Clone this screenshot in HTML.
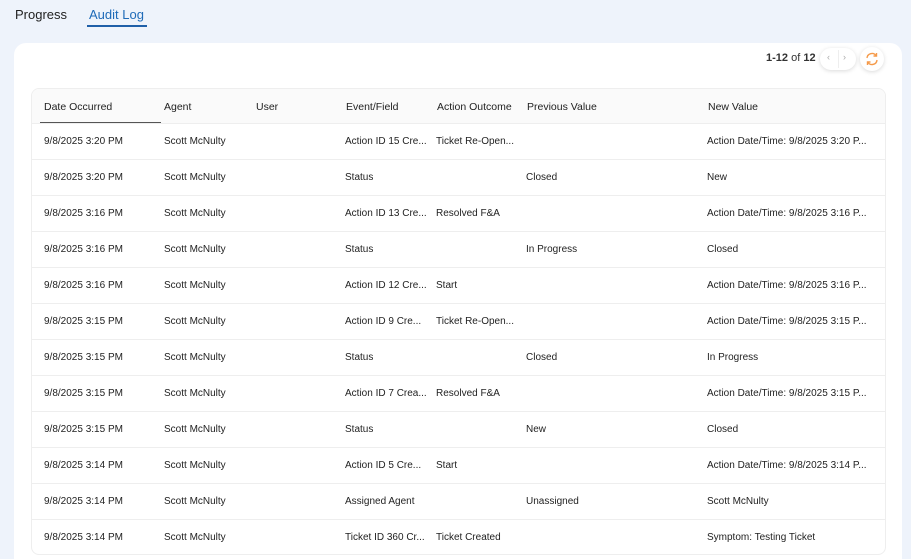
<!DOCTYPE html><html><head><style>
*{margin:0;padding:0;box-sizing:border-box}
html,body{width:911px;height:559px;overflow:hidden}
body{background:#eef3fb;font-family:"Liberation Sans",sans-serif;color:#222;position:relative}
.tab{position:absolute;top:7px;font-size:13px}
.card{position:absolute;left:14px;top:43px;width:888px;height:516px;background:#fff;border-radius:12px 12px 0 0}
.pg{position:absolute;left:766px;top:52px;font-size:11px;color:#333}
.nav{position:absolute;left:820px;top:48px;width:36px;height:22px;border-radius:11px;background:#fff;box-shadow:0 1px 4px rgba(0,0,0,.15);font-size:9px;color:#aaa}
.ref{position:absolute;left:860px;top:47px;width:24px;height:24px;border-radius:12px;background:#fff;box-shadow:0 1px 4px rgba(0,0,0,.15)}
.tbl{position:absolute;left:31px;top:88px;width:855px;height:467px;border:1px solid #eee;border-radius:8px;overflow:hidden}
.row{position:absolute;left:0;width:855px;height:36px;border-top:1px solid #eee;font-size:10px}
.row span,.hd span{position:absolute;top:12px;white-space:nowrap}
.hd{position:absolute;left:0;top:0;width:855px;height:34px;background:#fafafa;font-size:10.5px}
.hd span{top:12px}
</style></head><body>
<div class="tab" style="left:15px">Progress</div>
<div class="tab" style="left:89px;color:#1f6bb8">Audit Log</div>
<div style="position:absolute;left:87px;top:25px;width:60px;height:2px;background:#1f5fa8"></div>
<div class="card"></div>
<div class="pg"><b>1-12</b> of <b>12</b></div>
<div class="nav"><span style="position:absolute;left:7px;top:4px">‹</span><span style="position:absolute;left:18px;top:2px;width:1px;height:18px;background:#eee"></span><span style="position:absolute;left:23px;top:4px">›</span></div>
<div class="ref"><svg width="24" height="24" viewBox="0 0 24 24" fill="none" stroke="#f59a4a" stroke-width="1.4"><path d="M7 11a5 5 0 0 1 9-2.5M17 13a5 5 0 0 1-9 2.5"/><path d="M16.5 6v3h-3M7.5 18v-3h3"/></svg></div>
<div class="tbl">
<div class="hd"><span style="left:12px">Date Occurred</span><span style="left:132px">Agent</span><span style="left:224px">User</span><span style="left:314px">Event/Field</span><span style="left:405px">Action Outcome</span><span style="left:495px">Previous Value</span><span style="left:676px">New Value</span><div style="position:absolute;left:8px;top:33px;width:121px;height:1px;background:#555"></div></div>
<div class="row" style="top:34px"><span style="left:12px">9/8/2025 3:20 PM</span><span style="left:132px">Scott McNulty</span><span style="left:313px">Action ID 15 Cre...</span><span style="left:404px">Ticket Re-Open...</span><span style="left:675px">Action Date/Time: 9/8/2025 3:20 P...</span></div>
<div class="row" style="top:70px"><span style="left:12px">9/8/2025 3:20 PM</span><span style="left:132px">Scott McNulty</span><span style="left:313px">Status</span><span style="left:494px">Closed</span><span style="left:675px">New</span></div>
<div class="row" style="top:106px"><span style="left:12px">9/8/2025 3:16 PM</span><span style="left:132px">Scott McNulty</span><span style="left:313px">Action ID 13 Cre...</span><span style="left:404px">Resolved F&amp;A</span><span style="left:675px">Action Date/Time: 9/8/2025 3:16 P...</span></div>
<div class="row" style="top:142px"><span style="left:12px">9/8/2025 3:16 PM</span><span style="left:132px">Scott McNulty</span><span style="left:313px">Status</span><span style="left:494px">In Progress</span><span style="left:675px">Closed</span></div>
<div class="row" style="top:178px"><span style="left:12px">9/8/2025 3:16 PM</span><span style="left:132px">Scott McNulty</span><span style="left:313px">Action ID 12 Cre...</span><span style="left:404px">Start</span><span style="left:675px">Action Date/Time: 9/8/2025 3:16 P...</span></div>
<div class="row" style="top:214px"><span style="left:12px">9/8/2025 3:15 PM</span><span style="left:132px">Scott McNulty</span><span style="left:313px">Action ID 9 Cre...</span><span style="left:404px">Ticket Re-Open...</span><span style="left:675px">Action Date/Time: 9/8/2025 3:15 P...</span></div>
<div class="row" style="top:250px"><span style="left:12px">9/8/2025 3:15 PM</span><span style="left:132px">Scott McNulty</span><span style="left:313px">Status</span><span style="left:494px">Closed</span><span style="left:675px">In Progress</span></div>
<div class="row" style="top:286px"><span style="left:12px">9/8/2025 3:15 PM</span><span style="left:132px">Scott McNulty</span><span style="left:313px">Action ID 7 Crea...</span><span style="left:404px">Resolved F&amp;A</span><span style="left:675px">Action Date/Time: 9/8/2025 3:15 P...</span></div>
<div class="row" style="top:322px"><span style="left:12px">9/8/2025 3:15 PM</span><span style="left:132px">Scott McNulty</span><span style="left:313px">Status</span><span style="left:494px">New</span><span style="left:675px">Closed</span></div>
<div class="row" style="top:358px"><span style="left:12px">9/8/2025 3:14 PM</span><span style="left:132px">Scott McNulty</span><span style="left:313px">Action ID 5 Cre...</span><span style="left:404px">Start</span><span style="left:675px">Action Date/Time: 9/8/2025 3:14 P...</span></div>
<div class="row" style="top:394px"><span style="left:12px">9/8/2025 3:14 PM</span><span style="left:132px">Scott McNulty</span><span style="left:313px">Assigned Agent</span><span style="left:494px">Unassigned</span><span style="left:675px">Scott McNulty</span></div>
<div class="row" style="top:430px"><span style="left:12px">9/8/2025 3:14 PM</span><span style="left:132px">Scott McNulty</span><span style="left:313px">Ticket ID 360 Cr...</span><span style="left:404px">Ticket Created</span><span style="left:675px">Symptom: Testing Ticket</span></div>
</div>
</body></html>
